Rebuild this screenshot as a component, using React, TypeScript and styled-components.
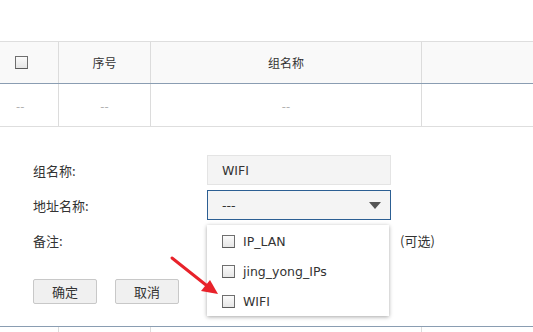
import React from "react";
import styled, { createGlobalStyle } from "styled-components";

const GlobalStyle = createGlobalStyle`
  html, body {
    margin: 0;
    padding: 0;
    background: #fff;
  }
  body {
    font-family: "DejaVu Sans", "Noto Sans CJK SC", sans-serif;
    color: #333;
  }
`;

const COLS = "58px 92px 271px 1fr";

/**
 * table
 */

const Page = styled.div`
  position: relative;
  width: 533px;
  height: 332px;
  overflow: hidden;
  padding-top: 41px;
  box-sizing: border-box;
`;

const TableHead = styled.div`
  display: grid;
  grid-template-columns: ${COLS};
  height: 43px;
  background: #f9f9f9;
  border-top: 1px solid #dedede;
  border-bottom: 1px solid #8a9db2;
  box-sizing: border-box;
`;

const TableRow = styled.div<{ $open?: boolean }>`
  display: grid;
  grid-template-columns: ${COLS};
  height: ${(p) => (p.$open ? "6px" : "43px")};
  border-bottom: ${(p) => (p.$open ? "none" : "1px solid #dedede")};
  border-top: ${(p) => (p.$open ? "1px solid #8a9db2" : "none")};
  box-sizing: border-box;
`;

const Cell = styled.div<{ $muted?: boolean }>`
  display: flex;
  align-items: center;
  justify-content: center;
  border-left: 1px solid #dcdcdc;
  font-family: "Noto Sans CJK SC", sans-serif;
  font-size: 12px;
  color: ${(p) => (p.$muted ? "#aaa" : "#333")};

  &:first-child {
    border-left: none;
    justify-content: flex-start;
    padding-left: 16px;
  }
`;

const Box = styled.span`
  display: inline-block;
  width: 13px;
  height: 13px;
  box-sizing: border-box;
  border: 1px solid #6f6f6f;
  border-bottom-color: #5a5a5a;
  background: linear-gradient(#fbfbfb, #e6e6e6);
  flex-shrink: 0;
`;

const HeadBox = styled(Box)`
  margin-left: -1px;
`;

/**
 * form
 */

const Form = styled.div`
  display: flex;
  flex-direction: column;
  gap: 5px;
  padding: 28px 0 0 33px;
`;

const FormRow = styled.div`
  display: grid;
  grid-template-columns: 174px 184px auto;
  align-items: center;
  height: 30px;
`;

const Label = styled.label`
  font-family: "Noto Sans CJK SC", sans-serif;
  font-size: 13px;
  color: #333;
`;

const Field = styled.div<{ $focus?: boolean }>`
  position: relative;
  height: 30px;
  box-sizing: border-box;
  display: flex;
  align-items: center;
  padding-left: 14px;
  font-size: 12.5px;
  color: #333;
  background: #f4f4f4;
  border: 1px solid ${(p) => (p.$focus ? "#2c5f93" : "#e4e4e4")};
`;

const Arrow = styled.span`
  position: absolute;
  right: 9px;
  top: 11px;
  width: 0;
  height: 0;
  border-left: 6px solid transparent;
  border-right: 6px solid transparent;
  border-top: 7px solid #555;
`;

const Hint = styled.span`
  font-family: "Noto Sans CJK SC", sans-serif;
  font-size: 13px;
  color: #333;
  padding-left: 9px;
`;

const Menu = styled.ul`
  position: absolute;
  z-index: 2;
  top: 34px;
  left: -1px;
  width: 182px;
  height: 91px;
  margin: 0;
  padding: 1px 0 0;
  list-style: none;
  background: #fff;
  box-sizing: border-box;
  box-shadow: 0 1px 4px rgba(0, 0, 0, 0.35);
`;

const MenuItem = styled.li`
  display: flex;
  align-items: center;
  gap: 8px;
  height: 30px;
  padding-left: 15px;
  font-size: 12.5px;
  color: #333;
`;

const Buttons = styled.div`
  display: flex;
  gap: 18px;
  margin-top: 19px;
  margin-bottom: 22px;
`;

const Button = styled.button`
  width: 64px;
  height: 25px;
  box-sizing: border-box;
  border: 1px solid #c8c8c8;
  border-radius: 2px;
  background: #f0f0f0;
  font-family: "Noto Sans CJK SC", sans-serif;
  font-size: 13px;
  color: #333;
  padding: 0;
`;

const Pointer = styled.svg`
  position: absolute;
  left: 168px;
  top: 254px;
  z-index: 3;
`;

const groups = ["IP_LAN", "jing_yong_IPs", "WIFI"];

export default function App() {
  return (
    <Page>
      <GlobalStyle />
      <TableHead>
        <Cell>
          <HeadBox />
        </Cell>
        <Cell>序号</Cell>
        <Cell>组名称</Cell>
        <Cell />
      </TableHead>
      <TableRow>
        <Cell $muted>--</Cell>
        <Cell $muted>--</Cell>
        <Cell $muted>--</Cell>
        <Cell />
      </TableRow>

      <Form>
        <FormRow>
          <Label>组名称:</Label>
          <Field>WIFI</Field>
        </FormRow>
        <FormRow>
          <Label>地址名称:</Label>
          <Field $focus>
            ---
            <Arrow />
            <Menu>
              {groups.map((g) => (
                <MenuItem key={g}>
                  <Box />
                  {g}
                </MenuItem>
              ))}
            </Menu>
          </Field>
        </FormRow>
        <FormRow>
          <Label>备注:</Label>
          <span />
          <Hint>(可选)</Hint>
        </FormRow>
        <Buttons>
          <Button>确定</Button>
          <Button>取消</Button>
        </Buttons>
      </Form>

      <TableRow $open>
        <Cell />
        <Cell />
        <Cell />
        <Cell />
      </TableRow>

      <Pointer width="56" height="44" viewBox="0 0 56 44">
        <path d="M4 4 L38 31" stroke="#e8222a" strokeWidth="3" strokeLinecap="round" />
        <path d="M50 40 L33 37 L42 26 Z" fill="#e8222a" />
      </Pointer>
    </Page>
  );
}
